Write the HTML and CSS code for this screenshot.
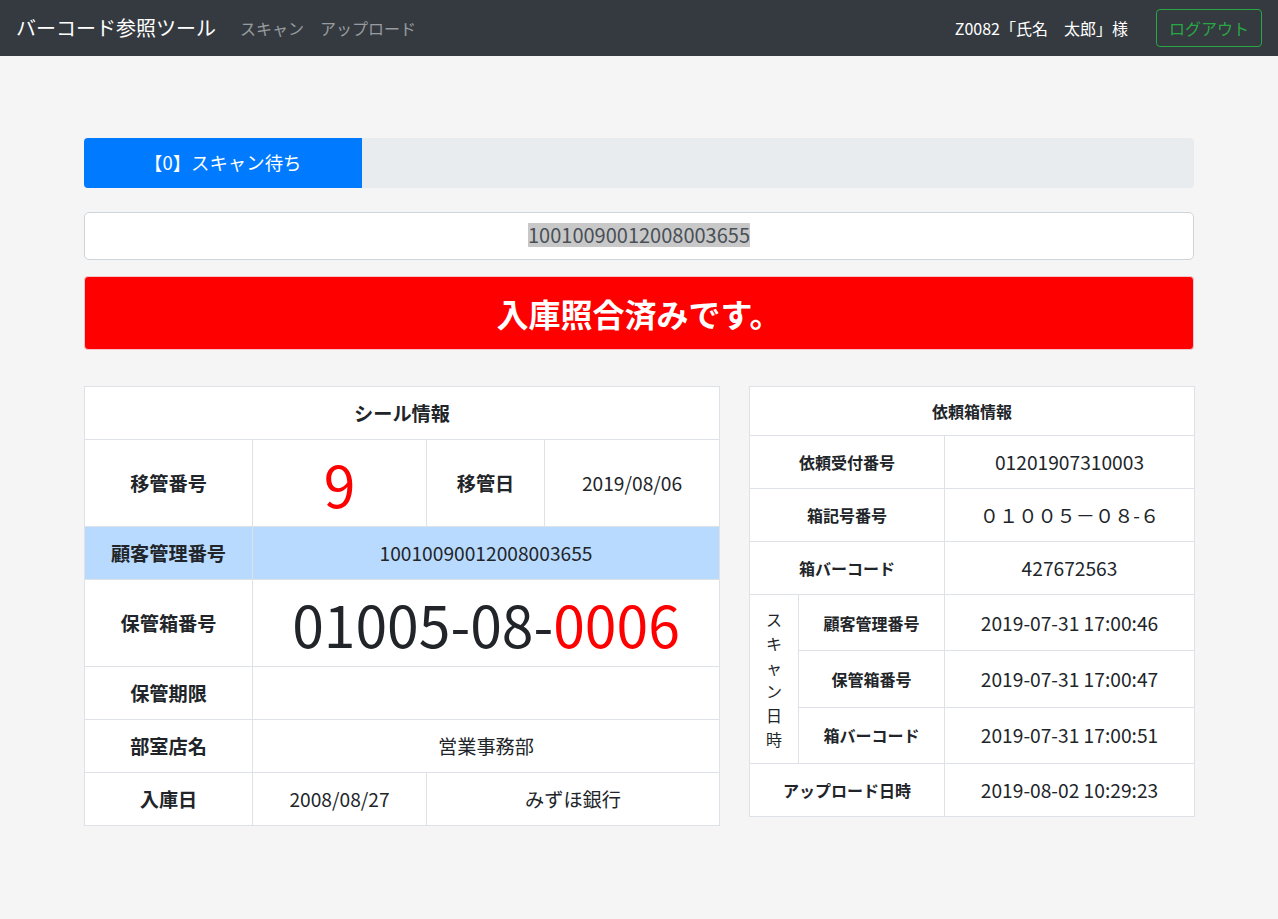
FILE: index.html
```html
<!DOCTYPE html>
<html lang="ja">
<head>
<meta charset="utf-8">
<title>バーコード参照ツール</title>
<link rel="stylesheet" href="styles.css">
</head>
<body>
<nav class="navbar">
  <a class="brand">バーコード参照ツール</a>
  <ul class="nav">
    <li><a class="nav-link">スキャン</a></li>
    <li><a class="nav-link">アップロード</a></li>
  </ul>
  <div class="nav-right">
    <span class="user">Z0082「氏名　太郎」様</span>
    <button class="btn-logout">ログアウト</button>
  </div>
</nav>

<main class="container">
  <div class="progress">
    <div class="progress-bar">【0】スキャン待ち</div>
  </div>

  <div class="scan-input"><span class="sel">10010090012008003655</span></div>

  <div class="alert">入庫照合済みです。</div>

  <div class="row">
    <table class="tbl tbl-seal">
      <colgroup>
        <col class="c1"><col class="c2"><col class="c3"><col class="c4">
      </colgroup>
      <tr><th colspan="4">シール情報</th></tr>
      <tr>
        <th>移管番号</th>
        <td><div class="big red">9</div></td>
        <th>移管日</th>
        <td>2019/08/06</td>
      </tr>
      <tr class="primary">
        <th>顧客管理番号</th>
        <td colspan="3">10010090012008003655</td>
      </tr>
      <tr>
        <th>保管箱番号</th>
        <td colspan="3"><div class="big">01005-08-<span class="red">0006</span></div></td>
      </tr>
      <tr>
        <th>保管期限</th>
        <td colspan="3"></td>
      </tr>
      <tr>
        <th>部室店名</th>
        <td colspan="3">営業事務部</td>
      </tr>
      <tr>
        <th>入庫日</th>
        <td>2008/08/27</td>
        <td colspan="2">みずほ銀行</td>
      </tr>
    </table>

    <table class="tbl tbl-box">
      <colgroup>
        <col class="d1"><col class="d2"><col class="d3">
      </colgroup>
      <tr><th colspan="3" class="head">依頼箱情報</th></tr>
      <tr><th colspan="2">依頼受付番号</th><td>01201907310003</td></tr>
      <tr><th colspan="2">箱記号番号</th><td>０１００５－０８-６</td></tr>
      <tr><th colspan="2">箱バーコード</th><td>427672563</td></tr>
      <tr>
        <td rowspan="3" class="vert">スキャン日時</td>
        <th>顧客管理番号</th><td>2019-07-31 17:00:46</td>
      </tr>
      <tr><th>保管箱番号</th><td>2019-07-31 17:00:47</td></tr>
      <tr><th>箱バーコード</th><td>2019-07-31 17:00:51</td></tr>
      <tr><th colspan="2">アップロード日時</th><td>2019-08-02 10:29:23</td></tr>
    </table>
  </div>
</main>
</body>
</html>
```

FILE: styles.css
```css
* { box-sizing: border-box; }

body {
  margin: 0;
  background: #f5f5f5;
  color: #212529;
  font-family: "Noto Sans CJK JP", "Noto Sans", sans-serif;
  font-size: 16px;
  line-height: 1.5;
}

.navbar {
  display: flex;
  align-items: center;
  height: 56px;
  padding: 8px 16px;
  background: #343a40;
}

.brand {
  font-size: 20px;
  line-height: 30px;
  padding: 5px 0;
  margin-right: 16px;
  color: #fff;
}

.nav {
  display: flex;
  list-style: none;
  margin: 0;
  padding: 0;
}

.nav-link {
  display: block;
  padding: 8px;
  color: rgba(255, 255, 255, 0.5);
}

.nav-right {
  margin-left: auto;
  display: flex;
  align-items: center;
}

.user {
  color: #fff;
  margin-right: 28px;
}

.btn-logout {
  font-family: inherit;
  font-size: 16px;
  line-height: 24px;
  padding: 6px 12px;
  height: 38px;
  background: transparent;
  color: #28a745;
  border: 1px solid #28a745;
  border-radius: 4px;
}

.container {
  width: 1140px;
  margin: 0 auto;
  padding: 82px 15px 0;
}

.progress {
  display: flex;
  height: 50px;
  background: #e9ecef;
  border-radius: 4px;
  overflow: hidden;
  margin-bottom: 24px;
}

.progress-bar {
  width: 25%;
  background: #007bff;
  color: #fff;
  font-size: 18.4px;
  display: flex;
  align-items: center;
  justify-content: center;
}

.scan-input {
  height: 48px;
  padding: 8px 16px;
  background: #fff;
  border: 1px solid #ced4da;
  border-radius: 5px;
  font-size: 20px;
  line-height: 30px;
  color: #495057;
  text-align: center;
  margin-bottom: 16px;
}

.sel {
  background: #c8c8c8;
  display: inline-block;
  line-height: 24px;
  vertical-align: 1px;
}

.alert {
  background: #ff0000;
  border: 1px solid #f5c6cb;
  border-radius: 4px;
  padding: 12px 20px;
  color: #fff;
  font-weight: bold;
  font-size: 32px;
  line-height: 48px;
  text-align: center;
  margin-bottom: 36px;
}

.row {
  display: grid;
  grid-template-columns: 635px 445px;
  column-gap: 30px;
  align-items: start;
}

.tbl {
  width: 100%;
  table-layout: fixed;
  border-collapse: collapse;
  background: #fff;
  border: 1px solid #dee2e6;
}

.tbl th,
.tbl td {
  border: 1px solid #dee2e6;
  padding: 12px;
  text-align: center;
  vertical-align: middle;
}

.tbl-seal th,
.tbl-seal td {
  font-size: 19.2px;
  line-height: 28px;
}

.tbl-seal .c1 { width: 168px; }
.tbl-seal .c2 { width: 174px; }
.tbl-seal .c3 { width: 118px; }
.tbl-seal .c4 { width: 175px; }

.tbl-seal td { font-weight: normal; }

.big {
  font-size: 57px;
  line-height: 62px;
}

.red { color: #ff0000; }

.primary th,
.primary td {
  background: #b8daff;
}

.tbl-box th {
  font-size: 16px;
  line-height: 24px;
}

.tbl-box td {
  font-size: 19.2px;
  line-height: 28px;
}

.tbl-box .d1 { width: 49px; }
.tbl-box .d2 { width: 146px; }
.tbl-box .d3 { width: 250px; }

.tbl-box td.vert {
  font-size: 16px;
  line-height: 24px;
  word-break: break-all;
}
```
